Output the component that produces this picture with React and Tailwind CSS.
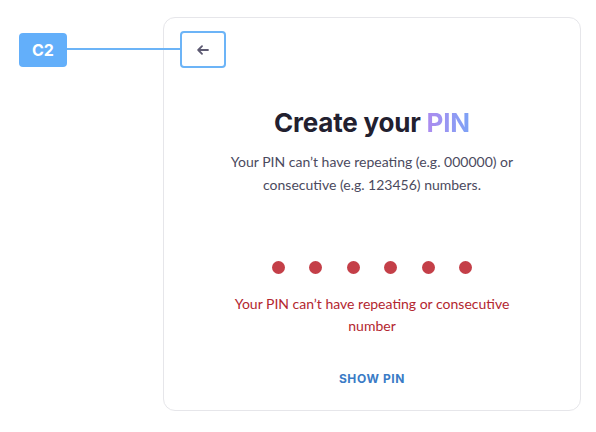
import React from "react";

export default function App() {
  return (
    <div className="relative w-[596px] h-[432px] bg-white" style={{ fontFamily: "Inter, 'Noto Sans', sans-serif" }}>
      {/* annotation badge + connector */}
      <div className="absolute left-[19px] top-[33px] w-[48px] h-[34px] rounded-[4px] bg-[#63affa] flex items-center justify-center text-white font-bold text-[16px]">
        C2
      </div>
      <div className="absolute left-[67px] top-[48px] w-[114px] h-[2px] bg-[#6cb4f7]" />

      <div className="pt-[17px] pl-[163px]">
        <div className="w-[418px] h-[394px] rounded-[12px] border border-[#e6e6ea] bg-white flex flex-col items-center px-4 pt-[13px]">
          <div className="self-start relative z-10">
            <button className="w-[46px] h-[37px] rounded-[4px] border-2 border-[#6cb4f7] bg-white flex items-center justify-center">
              <svg width="12" height="10" viewBox="0 0 12 10" fill="none" stroke="#5d5a72" strokeWidth="1.8" strokeLinecap="round" strokeLinejoin="round">
                <path d="M11 5H1.5M5 1.2L1.2 5L5 8.8" />
              </svg>
            </button>
          </div>
          <h1 className="mt-[39px] text-[26px] leading-[32px] font-bold text-[#22202f] tracking-[-0.2px]">
            Create your{" "}
            <span className="bg-gradient-to-r from-[#ac8bef] to-[#7ba2f6] bg-clip-text text-transparent">PIN</span>
          </h1>
          <p className="mt-[11px] w-[310px] text-center text-[14px] leading-[23px] text-[#4b4a5e]" style={{ fontFamily: "Lato, 'Noto Sans', sans-serif" }}>
            Your PIN can’t have repeating (e.g. 000000) or consecutive (e.g. 123456) numbers.
          </p>
          <div className="mt-[64px] flex gap-[24.6px] translate-y-[1px]">
            {[0, 1, 2, 3, 4, 5].map((i) => (
              <div key={i} className="w-[13px] h-[13px] rounded-full bg-[#c43f48]" />
            ))}
          </div>
          <p className="mt-[20px] w-[290px] text-center text-[14px] leading-[22px] text-[#b3262f]" style={{ fontFamily: "Lato, 'Noto Sans', sans-serif" }}>
            Your PIN can’t have repeating or consecutive number
          </p>
          <button className="mt-[34px] text-[12px] leading-[16px] font-bold tracking-[0.6px] text-[#3a7bc6]">
            SHOW PIN
          </button>
        </div>
      </div>
    </div>
  );
}
